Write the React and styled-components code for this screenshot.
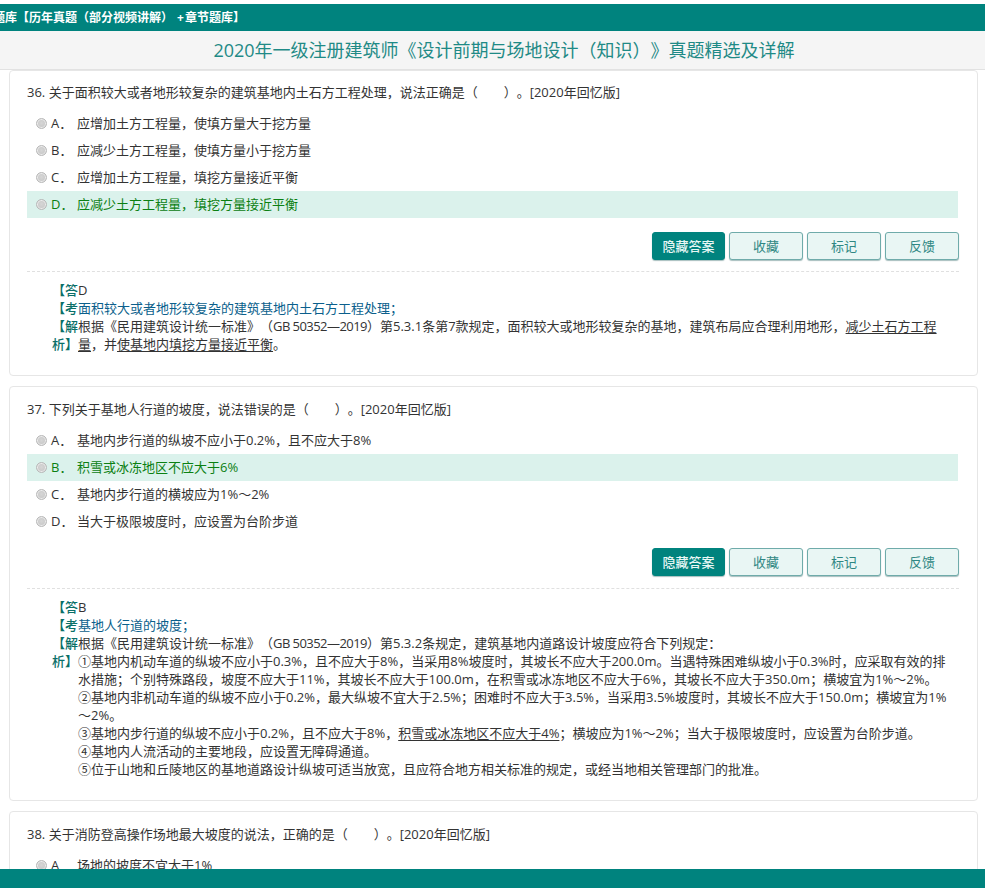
import React from "react";
import styled, { createGlobalStyle } from "styled-components";

const Global = createGlobalStyle`
  html, body { margin: 0; padding: 0; background: #fff; }
  body {
    font-family: "Open Sans", "Noto Sans CJK SC", sans-serif;
    font-size: 13px;
    color: #333;
    text-spacing-trim: space-all;
  }
  * { box-sizing: border-box; }
`;

const Page = styled.div`
  height: 100vh;
  display: flex;
  flex-direction: column;
  overflow: hidden;
  padding-top: 4px;
`;
const TopBar = styled.header`
  flex: none;
  height: 27px;
  line-height: 27px;
  background: #00837e;
  color: #fff;
  font-size: 12px;
  font-weight: 700;
  white-space: nowrap;
  text-indent: -7px;
  overflow: hidden;
`;
const Plus = styled.span`
  margin: 0 1px 0 4px;
`;
const TitleBar = styled.h1`
  flex: none;
  margin: 0;
  height: 39px;
  line-height: 38px;
  padding-left: 23px;
  background: #f5f5f5;
  border-bottom: 1px solid #e2e2e2;
  color: #1f8a86;
  font-size: 18px;
  font-weight: 400;
  text-align: center;
`;
const Main = styled.main`
  flex: 1;
  min-height: 0;
  overflow: hidden;
  padding: 0 7px 0 9px;
  display: flex;
  flex-direction: column;
  gap: 10px;
`;
const Card = styled.article`
  flex: none;
  border: 1px solid #e6e6e6;
  border-radius: 4px;
  background: #fff;
  padding: ${p => p.$top}px 18px 0 17px;
  height: ${p => p.$height ? `${p.$height}px` : "auto"};
`;
const Question = styled.p`
  margin: 0 0 9px;
  line-height: 18px;
  white-space: pre;
`;
const Option = styled.div`
  display: flex;
  align-items: center;
  height: 27px;
  width: 931px;
  padding: 0 0 2px 9px;
  background: ${p => p.$correct ? "#dbf2ec" : "transparent"};
  color: ${p => p.$correct ? "#0b8012" : "inherit"};
`;
const Radio = styled.span`
  flex: none;
  width: 11px;
  height: 11px;
  margin: 1px 4px 0 0;
  border-radius: 50%;
  border: 1px solid #b8b8b8;
  background: radial-gradient(circle at 50% 45%, #d6d6d6, #c2c2c2);
  box-shadow: inset 0 0 0 1px #ececec;
`;
const Letter = styled.span`
  flex: none;
  width: 26px;
`;
const Actions = styled.div`
  display: flex;
  justify-content: flex-end;
  gap: 4px;
  width: 932px;
  margin-top: ${p => p.$gap}px;
`;
const Button = styled.button`
  width: ${p => p.$primary ? 73 : 74}px;
  height: 28px;
  padding: 0 0 2px;
  border: 1px solid ${p => p.$primary ? "#00837e" : "#6fabaa"};
  border-radius: 3px;
  background: ${p => p.$primary ? "#00837e" : "#e9f6f4"};
  color: ${p => p.$primary ? "#e8f7f5" : "#2f8783"};
  font: inherit;
  font-weight: ${p => p.$primary ? 500 : 400};
  box-shadow: 0 1px 1px rgba(0, 70, 70, .35);
`;
const Divider = styled.hr`
  width: 932px;
  margin: ${p => p.$gap}px 0 9px;
  border: 0;
  border-top: 1px dashed #e0e0e0;
`;
const AnswerRow = styled.div`
  display: flex;
  line-height: 18px;
  padding-left: 25px;
  color: ${p => p.$blue ? "#0b5f8c" : "inherit"};
`;
const Label = styled.span`
  flex: none;
  width: 26px;
  color: #0a6f68;
  font-weight: 500;
`;
const Body = styled.div`
  white-space: nowrap;
`;
const Mark = styled.u`
  text-underline-offset: 2px;
`;
const Code = styled.span`
  letter-spacing: -0.55px;
`;

const cards = [
  {
    top: 12, height: 306, actionsGap: 14, dividerGap: 11,
    q: "36. 关于面积较大或者地形较复杂的建筑基地内土石方工程处理，说法正确是（　　）。[2020年回忆版]",
    options: ["应增加土方工程量，使填方量大于挖方量", "应减少土方工程量，使填方量小于挖方量", "应增加土方工程量，填挖方量接近平衡", "应减少土方工程量，填挖方量接近平衡"],
    correct: 3,
    answer: "D",
    point: "面积较大或者地形较复杂的建筑基地内土石方工程处理；",
    analysis: [
      <>根据《民用建筑设计统一标准》（<Code>GB 50352—2019</Code>）第5.3.1条第7款规定，面积较大或地形较复杂的基地，建筑布局应合理利用地形，<Mark>减少土石方工程</Mark></>,
      <><Mark>量</Mark>，并<Mark>使基地内填挖方量接近平衡</Mark>。</>,
    ],
  },
  {
    top: 13, height: 415, actionsGap: 13, dividerGap: 12,
    q: "37. 下列关于基地人行道的坡度，说法错误的是（　　）。[2020年回忆版]",
    options: ["基地内步行道的纵坡不应小于0.2%，且不应大于8%", "积雪或冰冻地区不应大于6%", "基地内步行道的横坡应为1%～2%", "当大于极限坡度时，应设置为台阶步道"],
    correct: 1,
    answer: "B",
    point: "基地人行道的坡度；",
    analysis: [
      <>根据《民用建筑设计统一标准》（<Code>GB 50352—2019</Code>）第5.3.2条规定，建筑基地内道路设计坡度应符合下列规定：</>,
      "①基地内机动车道的纵坡不应小于0.3%，且不应大于8%，当采用8%坡度时，其坡长不应大于200.0m。当遇特殊困难纵坡小于0.3%时，应采取有效的排",
      "水措施；个别特殊路段，坡度不应大于11%，其坡长不应大于100.0m，在积雪或冰冻地区不应大于6%，其坡长不应大于350.0m；横坡宜为1%～2%。",
      "②基地内非机动车道的纵坡不应小于0.2%，最大纵坡不宜大于2.5%；困难时不应大于3.5%，当采用3.5%坡度时，其坡长不应大于150.0m；横坡宜为1%",
      "～2%。",
      <>③基地内步行道的纵坡不应小于0.2%，且不应大于8%，<Mark>积雪或冰冻地区不应大于4%</Mark>；横坡应为1%～2%；当大于极限坡度时，应设置为台阶步道。</>,
      "④基地内人流活动的主要地段，应设置无障碍通道。",
      "⑤位于山地和丘陵地区的基地道路设计纵坡可适当放宽，且应符合地方相关标准的规定，或经当地相关管理部门的批准。",
    ],
  },
  {
    top: 13,
    q: "38. 关于消防登高操作场地最大坡度的说法，正确的是（　　）。[2020年回忆版]",
    options: ["场地的坡度不宜大于1%"],
    correct: -1,
  },
];

const buttons = ["收藏", "标记", "反馈"];

function QuestionCard({ card }) {
  return (
    <Card $top={card.top} $height={card.height}>
      <Question>{card.q}</Question>
      {card.options.map((text, i) => (
        <Option key={text} $correct={i === card.correct}>
          <Radio />
          <Letter>{"ABCD"[i]}．</Letter>
          {text}
        </Option>
      ))}
      {card.answer && (
        <>
          <Actions $gap={card.actionsGap}>
            <Button $primary>隐藏答案</Button>
            {buttons.map(b => <Button key={b}>{b}</Button>)}
          </Actions>
          <Divider $gap={card.dividerGap} />
          <AnswerRow>
            <Label>【答</Label>
            <Body>{card.answer}</Body>
          </AnswerRow>
          <AnswerRow $blue>
            <Label>【考</Label>
            <Body>{card.point}</Body>
          </AnswerRow>
          <AnswerRow>
            <Label>【解析】</Label>
            <Body>
              {card.analysis.map((line, i) => <div key={i}>{line}</div>)}
            </Body>
          </AnswerRow>
        </>
      )}
    </Card>
  );
}

const Footer = styled.footer`
  flex: none;
  height: 19px;
  background: #00837e;
`;

export default function App() {
  return (
    <>
      <Global />
      <Page>
        <TopBar>题库【历年真题（部分视频讲解）<Plus>+</Plus>章节题库】</TopBar>
        <TitleBar>2020年一级注册建筑师《设计前期与场地设计（知识）》真题精选及详解</TitleBar>
        <Main>
          {cards.map(c => <QuestionCard key={c.q} card={c} />)}
        </Main>
        <Footer />
      </Page>
    </>
  );
}
